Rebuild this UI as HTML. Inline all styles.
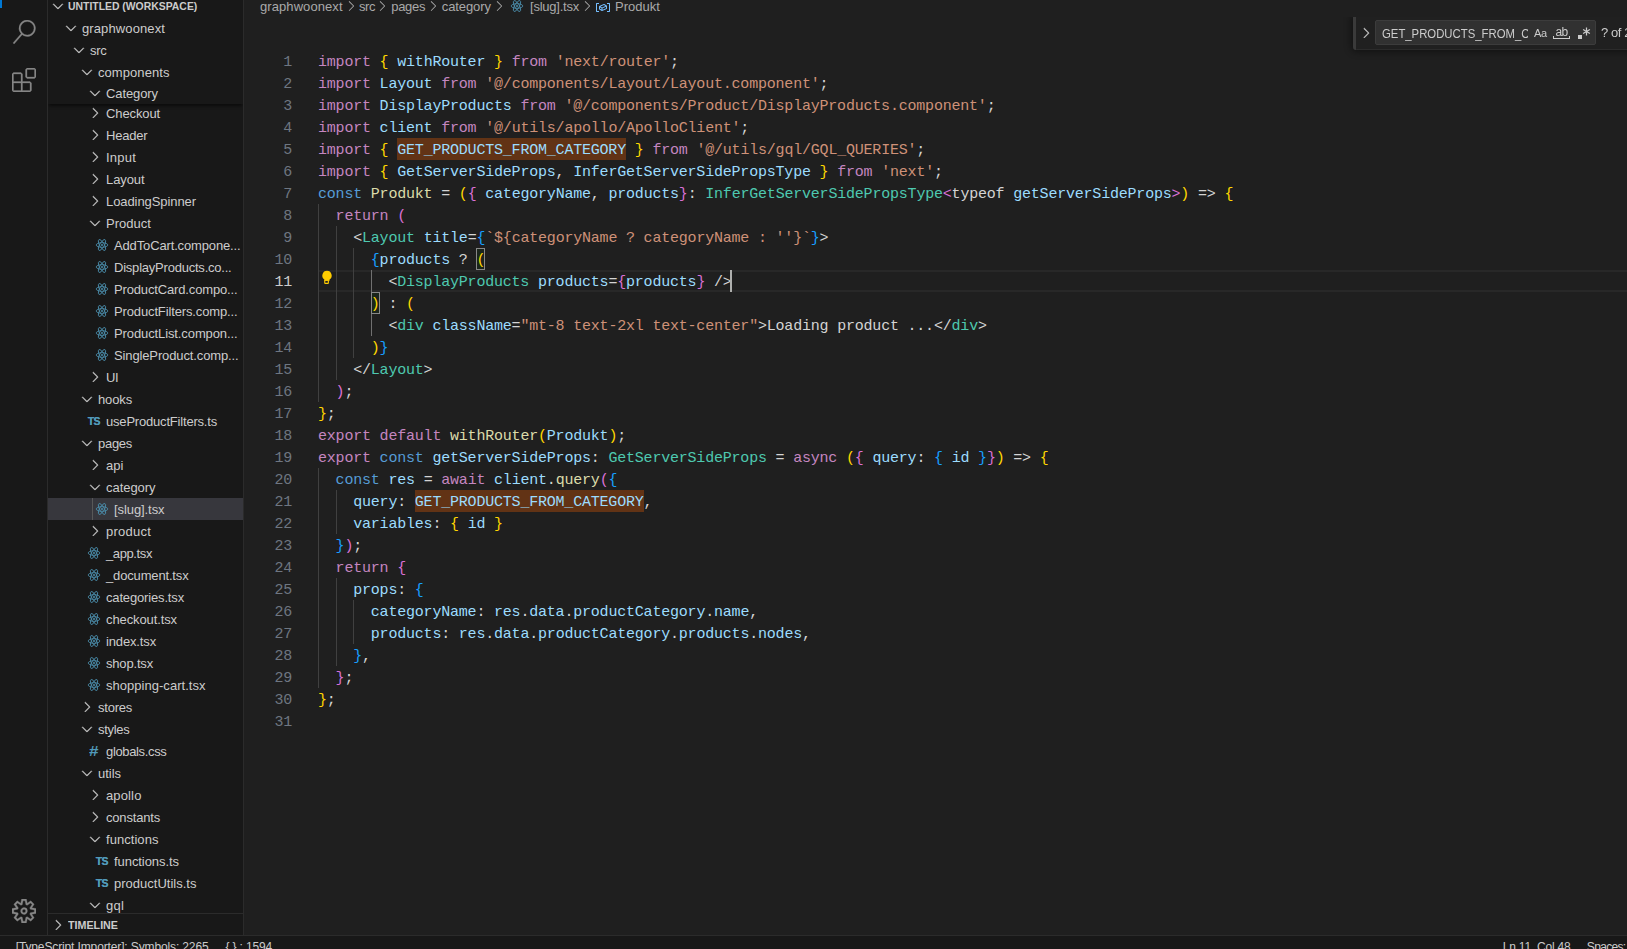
<!DOCTYPE html>
<html lang="en"><head><meta charset="utf-8"><title>[slug].tsx - Untitled (Workspace) - Visual Studio Code</title>
<style>
*{box-sizing:border-box;margin:0;padding:0}
html,body{width:1627px;height:949px;overflow:hidden;background:#1f1f1f}
body{font-family:"Liberation Sans",sans-serif;font-size:13px;color:#ccc;position:relative;-webkit-font-smoothing:antialiased}
#app{position:absolute;left:0;top:0;width:1627px;height:949px;overflow:hidden;background:#1f1f1f}
.abs{position:absolute}
#act{position:absolute;left:0;top:0;width:48px;height:935px;background:#181818;border-right:1px solid #2b2b2b}
#side{position:absolute;left:48px;top:0;width:196px;height:935px;background:#181818;border-right:1px solid #2b2b2b;overflow:hidden}
#side .inner{position:absolute;left:-48px;top:0;width:244px;height:935px}
#status{position:absolute;left:0;top:935px;width:1627px;height:22px;background:#181818;border-top:1px solid #2b2b2b;font-size:12px;color:#ccc}
.row{position:absolute;height:22px;line-height:22px;white-space:nowrap;color:#ccc}
.row .lbl{position:absolute;top:1px;left:16px}
.chev{position:absolute;left:-3px;top:3.4px;width:16px;height:16px;fill:#ccc;stroke:#ccc;stroke-width:.35}
.fi{position:absolute;left:-1px;top:4px;width:14px;height:14px}
.ts{position:absolute;left:-.3px;top:0;font-size:10.5px;font-weight:bold;color:#519aba;letter-spacing:-0.5px;text-shadow:0 0 .6px #519aba}
.hash{position:absolute;left:1px;top:0;font-size:14px;font-weight:bold;color:#519aba;transform:scaleX(1.22);transform-origin:0 50%}
.sel{position:absolute;left:48px;width:195px;height:22px;background:#37373d}
.hdr{position:absolute;font-size:11px;font-weight:bold;color:#ccc;line-height:22px;height:22px;white-space:nowrap}
.cl,.ln{position:absolute;height:22px;line-height:22px;white-space:pre;font-family:"Liberation Mono",monospace;font-size:15px;letter-spacing:-0.2045px}
.cl{left:318px;color:#d4d4d4;margin-top:2px}
.ln{left:243px;width:49px;text-align:right;color:#6e7681;margin-top:2px}
.ln.cur{color:#ccc}
.find{position:absolute;height:22px;background:#623315}
.bm{position:absolute;height:22px;border:1px solid #888;background:rgba(0,100,0,.1)}
.guide{position:absolute;width:1px;background:#404040}
.guide.act{background:#707070}
.curline{position:absolute;left:319px;top:270px;width:1308px;height:22px;border-top:2px solid #282828;border-bottom:2px solid #282828}
.bch{position:absolute;top:-1.6px;width:16px;height:16px;fill:#a9a9a9}
.fi-t{line-height:22px;height:22px;white-space:nowrap;color:#ccc;font-size:13px}
.bc{position:absolute;top:-4px;height:22px;line-height:22px;color:#a9a9a9;white-space:nowrap}
</style></head><body><div id="app">
<!--EDITOR-->
<div id="editor">
<div class="curline"></div>
<div class="guide" style="left:318.0px;top:204px;height:198px"></div><div class="guide" style="left:335.6px;top:226px;height:154px"></div><div class="guide" style="left:353.2px;top:248px;height:110px"></div><div class="guide act" style="left:370.8px;top:270px;height:66px"></div><div class="guide" style="left:318.0px;top:468px;height:220px"></div><div class="guide" style="left:335.6px;top:490px;height:44px"></div><div class="guide" style="left:335.6px;top:578px;height:88px"></div><div class="guide" style="left:353.2px;top:600px;height:44px"></div>
<div class="ln" style="top:50px">1</div>
<div class="cl" style="top:50px"><span style="color:#c586c0">import</span> <span style="color:#ffd700">{</span> <span style="color:#9cdcfe">withRouter</span> <span style="color:#ffd700">}</span> <span style="color:#c586c0">from</span> <span style="color:#ce9178">'next/router'</span><span style="color:#d4d4d4">;</span></div>
<div class="ln" style="top:72px">2</div>
<div class="cl" style="top:72px"><span style="color:#c586c0">import</span> <span style="color:#9cdcfe">Layout</span> <span style="color:#c586c0">from</span> <span style="color:#ce9178">'@/components/Layout/Layout.component'</span><span style="color:#d4d4d4">;</span></div>
<div class="ln" style="top:94px">3</div>
<div class="cl" style="top:94px"><span style="color:#c586c0">import</span> <span style="color:#9cdcfe">DisplayProducts</span> <span style="color:#c586c0">from</span> <span style="color:#ce9178">'@/components/Product/DisplayProducts.component'</span><span style="color:#d4d4d4">;</span></div>
<div class="ln" style="top:116px">4</div>
<div class="cl" style="top:116px"><span style="color:#c586c0">import</span> <span style="color:#9cdcfe">client</span> <span style="color:#c586c0">from</span> <span style="color:#ce9178">'@/utils/apollo/ApolloClient'</span><span style="color:#d4d4d4">;</span></div>
<div class="ln" style="top:138px">5</div>
<div class="find" style="left:397.47px;top:138px;width:228.72px"></div>
<div class="cl" style="top:138px"><span style="color:#c586c0">import</span> <span style="color:#ffd700">{</span> <span style="color:#9cdcfe">GET_PRODUCTS_FROM_CATEGORY</span> <span style="color:#ffd700">}</span> <span style="color:#c586c0">from</span> <span style="color:#ce9178">'@/utils/gql/GQL_QUERIES'</span><span style="color:#d4d4d4">;</span></div>
<div class="ln" style="top:160px">6</div>
<div class="cl" style="top:160px"><span style="color:#c586c0">import</span> <span style="color:#ffd700">{</span> <span style="color:#9cdcfe">GetServerSideProps</span><span style="color:#d4d4d4">, </span><span style="color:#9cdcfe">InferGetServerSidePropsType</span> <span style="color:#ffd700">}</span> <span style="color:#c586c0">from</span> <span style="color:#ce9178">'next'</span><span style="color:#d4d4d4">;</span></div>
<div class="ln" style="top:182px">7</div>
<div class="cl" style="top:182px"><span style="color:#569cd6">const</span> <span style="color:#dcdcaa">Produkt</span><span style="color:#d4d4d4"> = </span><span style="color:#ffd700">(</span><span style="color:#da70d6">{</span> <span style="color:#9cdcfe">categoryName</span><span style="color:#d4d4d4">, </span><span style="color:#9cdcfe">products</span><span style="color:#da70d6">}</span><span style="color:#d4d4d4">: </span><span style="color:#4ec9b0">InferGetServerSidePropsType</span><span style="color:#da70d6">&lt;</span><span style="color:#d4d4d4">typeof </span><span style="color:#9cdcfe">getServerSideProps</span><span style="color:#da70d6">&gt;</span><span style="color:#ffd700">)</span><span style="color:#d4d4d4"> =&gt; </span><span style="color:#ffd700">{</span></div>
<div class="ln" style="top:204px">8</div>
<div class="cl" style="top:204px">  <span style="color:#c586c0">return</span> <span style="color:#da70d6">(</span></div>
<div class="ln" style="top:226px">9</div>
<div class="cl" style="top:226px">    <span style="color:#d4d4d4">&lt;</span><span style="color:#4ec9b0">Layout</span> <span style="color:#9cdcfe">title</span><span style="color:#d4d4d4">=</span><span style="color:#179fff">{</span><span style="color:#ce9178">`${categoryName ? categoryName : ''}`</span><span style="color:#179fff">}</span><span style="color:#d4d4d4">&gt;</span></div>
<div class="ln" style="top:248px">10</div>
<div class="bm" style="left:476.35px;top:248px;width:8.80px"></div>
<div class="cl" style="top:248px">      <span style="color:#179fff">{</span><span style="color:#9cdcfe">products</span><span style="color:#d4d4d4"> ? </span><span style="color:#ffd700">(</span></div>
<div class="ln cur" style="top:270px">11</div>
<div class="cl" style="top:270px">        <span style="color:#d4d4d4">&lt;</span><span style="color:#4ec9b0">DisplayProducts</span> <span style="color:#9cdcfe">products</span><span style="color:#d4d4d4">=</span><span style="color:#da70d6">{</span><span style="color:#9cdcfe">products</span><span style="color:#da70d6">}</span> <span style="color:#d4d4d4">/&gt;</span></div>
<div class="ln" style="top:292px">12</div>
<div class="bm" style="left:370.78px;top:292px;width:8.80px"></div>
<div class="cl" style="top:292px">      <span style="color:#ffd700">)</span><span style="color:#d4d4d4"> : </span><span style="color:#ffd700">(</span></div>
<div class="ln" style="top:314px">13</div>
<div class="cl" style="top:314px">        <span style="color:#d4d4d4">&lt;</span><span style="color:#4ec9b0">div</span> <span style="color:#9cdcfe">className</span><span style="color:#d4d4d4">=</span><span style="color:#ce9178">"mt-8 text-2xl text-center"</span><span style="color:#d4d4d4">&gt;</span><span style="color:#d4d4d4">Loading product ...</span><span style="color:#d4d4d4">&lt;/</span><span style="color:#4ec9b0">div</span><span style="color:#d4d4d4">&gt;</span></div>
<div class="ln" style="top:336px">14</div>
<div class="cl" style="top:336px">      <span style="color:#ffd700">)</span><span style="color:#179fff">}</span></div>
<div class="ln" style="top:358px">15</div>
<div class="cl" style="top:358px">    <span style="color:#d4d4d4">&lt;/</span><span style="color:#4ec9b0">Layout</span><span style="color:#d4d4d4">&gt;</span></div>
<div class="ln" style="top:380px">16</div>
<div class="cl" style="top:380px">  <span style="color:#da70d6">)</span><span style="color:#d4d4d4">;</span></div>
<div class="ln" style="top:402px">17</div>
<div class="cl" style="top:402px"><span style="color:#ffd700">}</span><span style="color:#d4d4d4">;</span></div>
<div class="ln" style="top:424px">18</div>
<div class="cl" style="top:424px"><span style="color:#c586c0">export</span> <span style="color:#c586c0">default</span> <span style="color:#dcdcaa">withRouter</span><span style="color:#ffd700">(</span><span style="color:#9cdcfe">Produkt</span><span style="color:#ffd700">)</span><span style="color:#d4d4d4">;</span></div>
<div class="ln" style="top:446px">19</div>
<div class="cl" style="top:446px"><span style="color:#c586c0">export</span> <span style="color:#569cd6">const</span> <span style="color:#9cdcfe">getServerSideProps</span><span style="color:#d4d4d4">: </span><span style="color:#4ec9b0">GetServerSideProps</span><span style="color:#d4d4d4"> = </span><span style="color:#c586c0">async</span> <span style="color:#ffd700">(</span><span style="color:#da70d6">{</span> <span style="color:#9cdcfe">query</span><span style="color:#d4d4d4">: </span><span style="color:#179fff">{</span> <span style="color:#9cdcfe">id</span> <span style="color:#179fff">}</span><span style="color:#da70d6">}</span><span style="color:#ffd700">)</span><span style="color:#d4d4d4"> =&gt; </span><span style="color:#ffd700">{</span></div>
<div class="ln" style="top:468px">20</div>
<div class="cl" style="top:468px">  <span style="color:#569cd6">const</span> <span style="color:#9cdcfe">res</span><span style="color:#d4d4d4"> = </span><span style="color:#c586c0">await</span> <span style="color:#9cdcfe">client</span><span style="color:#d4d4d4">.</span><span style="color:#dcdcaa">query</span><span style="color:#da70d6">(</span><span style="color:#179fff">{</span></div>
<div class="ln" style="top:490px">21</div>
<div class="find" style="left:415.07px;top:490px;width:228.72px"></div>
<div class="cl" style="top:490px">    <span style="color:#9cdcfe">query</span><span style="color:#d4d4d4">: </span><span style="color:#9cdcfe">GET_PRODUCTS_FROM_CATEGORY</span><span style="color:#d4d4d4">,</span></div>
<div class="ln" style="top:512px">22</div>
<div class="cl" style="top:512px">    <span style="color:#9cdcfe">variables</span><span style="color:#d4d4d4">: </span><span style="color:#ffd700">{</span> <span style="color:#9cdcfe">id</span> <span style="color:#ffd700">}</span></div>
<div class="ln" style="top:534px">23</div>
<div class="cl" style="top:534px">  <span style="color:#179fff">}</span><span style="color:#da70d6">)</span><span style="color:#d4d4d4">;</span></div>
<div class="ln" style="top:556px">24</div>
<div class="cl" style="top:556px">  <span style="color:#c586c0">return</span> <span style="color:#da70d6">{</span></div>
<div class="ln" style="top:578px">25</div>
<div class="cl" style="top:578px">    <span style="color:#9cdcfe">props</span><span style="color:#d4d4d4">: </span><span style="color:#179fff">{</span></div>
<div class="ln" style="top:600px">26</div>
<div class="cl" style="top:600px">      <span style="color:#9cdcfe">categoryName</span><span style="color:#d4d4d4">: </span><span style="color:#9cdcfe">res</span><span style="color:#d4d4d4">.</span><span style="color:#9cdcfe">data</span><span style="color:#d4d4d4">.</span><span style="color:#9cdcfe">productCategory</span><span style="color:#d4d4d4">.</span><span style="color:#9cdcfe">name</span><span style="color:#d4d4d4">,</span></div>
<div class="ln" style="top:622px">27</div>
<div class="cl" style="top:622px">      <span style="color:#9cdcfe">products</span><span style="color:#d4d4d4">: </span><span style="color:#9cdcfe">res</span><span style="color:#d4d4d4">.</span><span style="color:#9cdcfe">data</span><span style="color:#d4d4d4">.</span><span style="color:#9cdcfe">productCategory</span><span style="color:#d4d4d4">.</span><span style="color:#9cdcfe">products</span><span style="color:#d4d4d4">.</span><span style="color:#9cdcfe">nodes</span><span style="color:#d4d4d4">,</span></div>
<div class="ln" style="top:644px">28</div>
<div class="cl" style="top:644px">    <span style="color:#179fff">}</span><span style="color:#d4d4d4">,</span></div>
<div class="ln" style="top:666px">29</div>
<div class="cl" style="top:666px">  <span style="color:#da70d6">}</span><span style="color:#d4d4d4">;</span></div>
<div class="ln" style="top:688px">30</div>
<div class="cl" style="top:688px"><span style="color:#ffd700">}</span><span style="color:#d4d4d4">;</span></div>
<div class="ln" style="top:710px">31</div>
<div class="abs" style="left:730px;top:270px;width:2px;height:22px;background:#aeafad"></div>
<span class="bc" style="left:260px;letter-spacing:0.077px">graphwoonext</span><span class="bc" style="left:359px;letter-spacing:-0.448px">src</span><span class="bc" style="left:391.3px;letter-spacing:-0.324px">pages</span><span class="bc" style="left:441.8px;letter-spacing:-0.097px">category</span><span class="bc" style="left:530px;letter-spacing:-0.230px">[slug].tsx</span><span class="bc" style="left:615px;letter-spacing:-0.002px">Produkt</span><svg class="bch" style="left:342.6px" viewBox="0 0 16 16"><path d="M10.072 8.024L5.715 3.667l.618-.62L11 7.716v.618L6.333 13l-.618-.619 4.357-4.357z"/></svg><svg class="bch" style="left:374.2px" viewBox="0 0 16 16"><path d="M10.072 8.024L5.715 3.667l.618-.62L11 7.716v.618L6.333 13l-.618-.619 4.357-4.357z"/></svg><svg class="bch" style="left:424.9px" viewBox="0 0 16 16"><path d="M10.072 8.024L5.715 3.667l.618-.62L11 7.716v.618L6.333 13l-.618-.619 4.357-4.357z"/></svg><svg class="bch" style="left:491px" viewBox="0 0 16 16"><path d="M10.072 8.024L5.715 3.667l.618-.62L11 7.716v.618L6.333 13l-.618-.619 4.357-4.357z"/></svg><svg class="bch" style="left:579px" viewBox="0 0 16 16"><path d="M10.072 8.024L5.715 3.667l.618-.62L11 7.716v.618L6.333 13l-.618-.619 4.357-4.357z"/></svg><svg class="abs" style="left:510px;top:-1px;width:14px;height:14px" viewBox="0 0 14 14"><g fill="none" stroke="#4b8fad" stroke-width=".85"><ellipse cx="7" cy="7" rx="5.8" ry="2.3"/><ellipse cx="7" cy="7" rx="6.1" ry="2.3" transform="rotate(60 7 7)"/><ellipse cx="7" cy="7" rx="6.1" ry="2.3" transform="rotate(120 7 7)"/></g><circle cx="7" cy="7" r="1" fill="#4b8fad"/></svg><svg class="abs" style="left:594.8px;top:-1.5px;width:16px;height:16px" viewBox="0 0 16 16"><path fill="#75beff" d="M2 5h2V4H1.5l-.5.5v8l.5.5H4v-1H2V5zm12.5-1H12v1h2v7h-2v1h2.5l.5-.5v-8l-.5-.5zm-2.74 2.57L12 7v2.51l-.3.45-4.5 2h-.46l-2.5-1.5-.24-.43v-2.5l.3-.46 4.5-2h.46l2.5 1.5zM5 9.71l1.5.9V9.28L5 8.38v1.33zm.58-2.15l1.45.87 3.39-1.5-1.45-.87-3.39 1.5zm1.95 3.17l3.5-1.56v-1.4l-3.5 1.55v1.41z"/></svg>
<div class="abs" style="left:1333px;top:17px;width:294px;height:60px;overflow:hidden;will-change:transform"><div class="abs" style="left:20px;top:0;width:290px;height:33px;background:#202020;box-shadow:0 0 7px 2px rgba(0,0,0,.42);border-bottom:1px solid #2b2b2b;border-bottom-left-radius:4px"></div><div class="abs" style="left:20px;top:0;width:3px;height:32.5px;background:#3a3a3a;border-bottom-left-radius:4px"></div><svg class="abs" style="left:25px;top:8px;width:16px;height:16px;fill:#ccc;stroke:#ccc;stroke-width:.35" viewBox="0 0 16 16"><path d="M10.072 8.024L5.715 3.667l.618-.62L11 7.716v.618L6.333 13l-.618-.619 4.357-4.357z"/></svg><div class="abs" style="left:42px;top:3px;width:221px;height:25px;background:#313131;border:1px solid #3c3c3c;border-radius:2px"></div><div class="abs" style="left:49px;top:6px;width:146px;height:22px;overflow:hidden"><span class="fi-t" style="display:inline-block;transform:scaleX(.872);transform-origin:0 50%">GET_PRODUCTS_FROM_CATEGORY</span></div><span class="abs" style="left:201px;top:5px;line-height:22px;font-size:11px;color:#ccc;letter-spacing:-0.3px">Aa</span><span class="abs" style="left:222.5px;top:4px;line-height:22px;font-size:12px;color:#ccc;letter-spacing:-0.6px">ab</span><div class="abs" style="left:220px;top:19px;width:17px;height:3px;border:1px solid #ccc;border-top:none"></div><div class="abs" style="left:245px;top:18px;width:4px;height:4px;background:#ccc"></div><svg class="abs" style="left:249px;top:10px;width:9px;height:9px" viewBox="0 0 9 9"><path d="M4.5 .6v7.8M1.1 2.55l6.8 3.9M7.9 2.55l-6.8 3.9" stroke="#ccc" stroke-width="1.25" fill="none"/></svg><span class="abs" style="left:268px;top:5px;line-height:22px;font-size:13px;color:#ccc;white-space:nowrap;letter-spacing:-0.4px">? of 2</span></div>
<svg class="abs" style="left:320px;top:270px;width:14px;height:15px" viewBox="0 0 14 15"><path fill="#ffcc00" d="M7 0.8a4.7 4.7 0 0 0-2.6 8.6v1.4h5.2V9.4A4.7 4.7 0 0 0 7 0.8z"/><rect x="4.75" y="10.1" width="3.6" height="3.3" rx=".5" fill="none" stroke="#ffcc00" stroke-width="1.1"/></svg>
</div>
<!--SIDEBAR-->
<div id="side"><div class="inner">
<div class="row" style="top:102px;left:90px"><svg class="chev" viewBox="0 0 16 16"><path d="M10.072 8.024L5.715 3.667l.618-.62L11 7.716v.618L6.333 13l-.618-.619 4.357-4.357z"/></svg><span class="lbl" style="left:16px;letter-spacing:-0.115px">Checkout</span></div>
<div class="row" style="top:124px;left:90px"><svg class="chev" viewBox="0 0 16 16"><path d="M10.072 8.024L5.715 3.667l.618-.62L11 7.716v.618L6.333 13l-.618-.619 4.357-4.357z"/></svg><span class="lbl" style="left:16px;letter-spacing:-0.190px">Header</span></div>
<div class="row" style="top:146px;left:90px"><svg class="chev" viewBox="0 0 16 16"><path d="M10.072 8.024L5.715 3.667l.618-.62L11 7.716v.618L6.333 13l-.618-.619 4.357-4.357z"/></svg><span class="lbl" style="left:16px;letter-spacing:0.216px">Input</span></div>
<div class="row" style="top:168px;left:90px"><svg class="chev" viewBox="0 0 16 16"><path d="M10.072 8.024L5.715 3.667l.618-.62L11 7.716v.618L6.333 13l-.618-.619 4.357-4.357z"/></svg><span class="lbl" style="left:16px;letter-spacing:-0.091px">Layout</span></div>
<div class="row" style="top:190px;left:90px"><svg class="chev" viewBox="0 0 16 16"><path d="M10.072 8.024L5.715 3.667l.618-.62L11 7.716v.618L6.333 13l-.618-.619 4.357-4.357z"/></svg><span class="lbl" style="left:16px;letter-spacing:-0.077px">LoadingSpinner</span></div>
<div class="row" style="top:212px;left:90px"><svg class="chev" viewBox="0 0 16 16"><path d="M7.976 10.072l4.357-4.357.62.618L8.284 11h-.618L3 6.333l.619-.618 4.357 4.357z"/></svg><span class="lbl" style="left:16px;letter-spacing:0.027px">Product</span></div>
<div class="row" style="top:234px;left:96px"><svg class="fi" viewBox="0 0 14 14"><g fill="none" stroke="#4b8fad" stroke-width=".85"><ellipse cx="7" cy="7" rx="5.8" ry="2.3"/><ellipse cx="7" cy="7" rx="6.1" ry="2.3" transform="rotate(60 7 7)"/><ellipse cx="7" cy="7" rx="6.1" ry="2.3" transform="rotate(120 7 7)"/></g><circle cx="7" cy="7" r="1" fill="#4b8fad"/></svg><span class="lbl" style="left:18px;letter-spacing:-0.143px">AddToCart.compone...</span></div>
<div class="row" style="top:256px;left:96px"><svg class="fi" viewBox="0 0 14 14"><g fill="none" stroke="#4b8fad" stroke-width=".85"><ellipse cx="7" cy="7" rx="5.8" ry="2.3"/><ellipse cx="7" cy="7" rx="6.1" ry="2.3" transform="rotate(60 7 7)"/><ellipse cx="7" cy="7" rx="6.1" ry="2.3" transform="rotate(120 7 7)"/></g><circle cx="7" cy="7" r="1" fill="#4b8fad"/></svg><span class="lbl" style="left:18px;letter-spacing:-0.219px">DisplayProducts.co...</span></div>
<div class="row" style="top:278px;left:96px"><svg class="fi" viewBox="0 0 14 14"><g fill="none" stroke="#4b8fad" stroke-width=".85"><ellipse cx="7" cy="7" rx="5.8" ry="2.3"/><ellipse cx="7" cy="7" rx="6.1" ry="2.3" transform="rotate(60 7 7)"/><ellipse cx="7" cy="7" rx="6.1" ry="2.3" transform="rotate(120 7 7)"/></g><circle cx="7" cy="7" r="1" fill="#4b8fad"/></svg><span class="lbl" style="left:18px;letter-spacing:-0.148px">ProductCard.compo...</span></div>
<div class="row" style="top:300px;left:96px"><svg class="fi" viewBox="0 0 14 14"><g fill="none" stroke="#4b8fad" stroke-width=".85"><ellipse cx="7" cy="7" rx="5.8" ry="2.3"/><ellipse cx="7" cy="7" rx="6.1" ry="2.3" transform="rotate(60 7 7)"/><ellipse cx="7" cy="7" rx="6.1" ry="2.3" transform="rotate(120 7 7)"/></g><circle cx="7" cy="7" r="1" fill="#4b8fad"/></svg><span class="lbl" style="left:18px;letter-spacing:-0.134px">ProductFilters.comp...</span></div>
<div class="row" style="top:322px;left:96px"><svg class="fi" viewBox="0 0 14 14"><g fill="none" stroke="#4b8fad" stroke-width=".85"><ellipse cx="7" cy="7" rx="5.8" ry="2.3"/><ellipse cx="7" cy="7" rx="6.1" ry="2.3" transform="rotate(60 7 7)"/><ellipse cx="7" cy="7" rx="6.1" ry="2.3" transform="rotate(120 7 7)"/></g><circle cx="7" cy="7" r="1" fill="#4b8fad"/></svg><span class="lbl" style="left:18px;letter-spacing:-0.106px">ProductList.compon...</span></div>
<div class="row" style="top:344px;left:96px"><svg class="fi" viewBox="0 0 14 14"><g fill="none" stroke="#4b8fad" stroke-width=".85"><ellipse cx="7" cy="7" rx="5.8" ry="2.3"/><ellipse cx="7" cy="7" rx="6.1" ry="2.3" transform="rotate(60 7 7)"/><ellipse cx="7" cy="7" rx="6.1" ry="2.3" transform="rotate(120 7 7)"/></g><circle cx="7" cy="7" r="1" fill="#4b8fad"/></svg><span class="lbl" style="left:18px;letter-spacing:-0.128px">SingleProduct.comp...</span></div>
<div class="row" style="top:366px;left:90px"><svg class="chev" viewBox="0 0 16 16"><path d="M10.072 8.024L5.715 3.667l.618-.62L11 7.716v.618L6.333 13l-.618-.619 4.357-4.357z"/></svg><span class="lbl" style="left:16px;letter-spacing:-0.500px">UI</span></div>
<div class="row" style="top:388px;left:82px"><svg class="chev" viewBox="0 0 16 16"><path d="M7.976 10.072l4.357-4.357.62.618L8.284 11h-.618L3 6.333l.619-.618 4.357 4.357z"/></svg><span class="lbl" style="left:16px;letter-spacing:-0.141px">hooks</span></div>
<div class="row" style="top:410px;left:88px"><span class="ts">TS</span><span class="lbl" style="left:18px;letter-spacing:-0.194px">useProductFilters.ts</span></div>
<div class="row" style="top:432px;left:82px"><svg class="chev" viewBox="0 0 16 16"><path d="M7.976 10.072l4.357-4.357.62.618L8.284 11h-.618L3 6.333l.619-.618 4.357 4.357z"/></svg><span class="lbl" style="left:16px;letter-spacing:-0.284px">pages</span></div>
<div class="row" style="top:454px;left:90px"><svg class="chev" viewBox="0 0 16 16"><path d="M10.072 8.024L5.715 3.667l.618-.62L11 7.716v.618L6.333 13l-.618-.619 4.357-4.357z"/></svg><span class="lbl" style="left:16px;letter-spacing:0.047px">api</span></div>
<div class="row" style="top:476px;left:90px"><svg class="chev" viewBox="0 0 16 16"><path d="M7.976 10.072l4.357-4.357.62.618L8.284 11h-.618L3 6.333l.619-.618 4.357 4.357z"/></svg><span class="lbl" style="left:16px;letter-spacing:-0.047px">category</span></div>
<div class="sel" style="top:498px"></div><div class="abs" style="left:92px;top:498px;width:1px;height:22px;background:#585858"></div><div class="row" style="top:498px;left:96px"><svg class="fi" viewBox="0 0 14 14"><g fill="none" stroke="#4b8fad" stroke-width=".85"><ellipse cx="7" cy="7" rx="5.8" ry="2.3"/><ellipse cx="7" cy="7" rx="6.1" ry="2.3" transform="rotate(60 7 7)"/><ellipse cx="7" cy="7" rx="6.1" ry="2.3" transform="rotate(120 7 7)"/></g><circle cx="7" cy="7" r="1" fill="#4b8fad"/></svg><span class="lbl" style="left:18px;letter-spacing:-0.080px">[slug].tsx</span></div>
<div class="row" style="top:520px;left:90px"><svg class="chev" viewBox="0 0 16 16"><path d="M10.072 8.024L5.715 3.667l.618-.62L11 7.716v.618L6.333 13l-.618-.619 4.357-4.357z"/></svg><span class="lbl" style="left:16px;letter-spacing:0.232px">product</span></div>
<div class="row" style="top:542px;left:88px"><svg class="fi" viewBox="0 0 14 14"><g fill="none" stroke="#4b8fad" stroke-width=".85"><ellipse cx="7" cy="7" rx="5.8" ry="2.3"/><ellipse cx="7" cy="7" rx="6.1" ry="2.3" transform="rotate(60 7 7)"/><ellipse cx="7" cy="7" rx="6.1" ry="2.3" transform="rotate(120 7 7)"/></g><circle cx="7" cy="7" r="1" fill="#4b8fad"/></svg><span class="lbl" style="left:18px;letter-spacing:-0.395px">_app.tsx</span></div>
<div class="row" style="top:564px;left:88px"><svg class="fi" viewBox="0 0 14 14"><g fill="none" stroke="#4b8fad" stroke-width=".85"><ellipse cx="7" cy="7" rx="5.8" ry="2.3"/><ellipse cx="7" cy="7" rx="6.1" ry="2.3" transform="rotate(60 7 7)"/><ellipse cx="7" cy="7" rx="6.1" ry="2.3" transform="rotate(120 7 7)"/></g><circle cx="7" cy="7" r="1" fill="#4b8fad"/></svg><span class="lbl" style="left:18px;letter-spacing:-0.157px">_document.tsx</span></div>
<div class="row" style="top:586px;left:88px"><svg class="fi" viewBox="0 0 14 14"><g fill="none" stroke="#4b8fad" stroke-width=".85"><ellipse cx="7" cy="7" rx="5.8" ry="2.3"/><ellipse cx="7" cy="7" rx="6.1" ry="2.3" transform="rotate(60 7 7)"/><ellipse cx="7" cy="7" rx="6.1" ry="2.3" transform="rotate(120 7 7)"/></g><circle cx="7" cy="7" r="1" fill="#4b8fad"/></svg><span class="lbl" style="left:18px;letter-spacing:-0.157px">categories.tsx</span></div>
<div class="row" style="top:608px;left:88px"><svg class="fi" viewBox="0 0 14 14"><g fill="none" stroke="#4b8fad" stroke-width=".85"><ellipse cx="7" cy="7" rx="5.8" ry="2.3"/><ellipse cx="7" cy="7" rx="6.1" ry="2.3" transform="rotate(60 7 7)"/><ellipse cx="7" cy="7" rx="6.1" ry="2.3" transform="rotate(120 7 7)"/></g><circle cx="7" cy="7" r="1" fill="#4b8fad"/></svg><span class="lbl" style="left:18px;letter-spacing:-0.105px">checkout.tsx</span></div>
<div class="row" style="top:630px;left:88px"><svg class="fi" viewBox="0 0 14 14"><g fill="none" stroke="#4b8fad" stroke-width=".85"><ellipse cx="7" cy="7" rx="5.8" ry="2.3"/><ellipse cx="7" cy="7" rx="6.1" ry="2.3" transform="rotate(60 7 7)"/><ellipse cx="7" cy="7" rx="6.1" ry="2.3" transform="rotate(120 7 7)"/></g><circle cx="7" cy="7" r="1" fill="#4b8fad"/></svg><span class="lbl" style="left:18px;letter-spacing:-0.146px">index.tsx</span></div>
<div class="row" style="top:652px;left:88px"><svg class="fi" viewBox="0 0 14 14"><g fill="none" stroke="#4b8fad" stroke-width=".85"><ellipse cx="7" cy="7" rx="5.8" ry="2.3"/><ellipse cx="7" cy="7" rx="6.1" ry="2.3" transform="rotate(60 7 7)"/><ellipse cx="7" cy="7" rx="6.1" ry="2.3" transform="rotate(120 7 7)"/></g><circle cx="7" cy="7" r="1" fill="#4b8fad"/></svg><span class="lbl" style="left:18px;letter-spacing:-0.178px">shop.tsx</span></div>
<div class="row" style="top:674px;left:88px"><svg class="fi" viewBox="0 0 14 14"><g fill="none" stroke="#4b8fad" stroke-width=".85"><ellipse cx="7" cy="7" rx="5.8" ry="2.3"/><ellipse cx="7" cy="7" rx="6.1" ry="2.3" transform="rotate(60 7 7)"/><ellipse cx="7" cy="7" rx="6.1" ry="2.3" transform="rotate(120 7 7)"/></g><circle cx="7" cy="7" r="1" fill="#4b8fad"/></svg><span class="lbl" style="left:18px;letter-spacing:0.029px">shopping-cart.tsx</span></div>
<div class="row" style="top:696px;left:82px"><svg class="chev" viewBox="0 0 16 16"><path d="M10.072 8.024L5.715 3.667l.618-.62L11 7.716v.618L6.333 13l-.618-.619 4.357-4.357z"/></svg><span class="lbl" style="left:16px;letter-spacing:-0.234px">stores</span></div>
<div class="row" style="top:718px;left:82px"><svg class="chev" viewBox="0 0 16 16"><path d="M7.976 10.072l4.357-4.357.62.618L8.284 11h-.618L3 6.333l.619-.618 4.357 4.357z"/></svg><span class="lbl" style="left:16px;letter-spacing:-0.289px">styles</span></div>
<div class="row" style="top:740px;left:88px"><span class="hash">#</span><span class="lbl" style="left:18px;letter-spacing:-0.347px">globals.css</span></div>
<div class="row" style="top:762px;left:82px"><svg class="chev" viewBox="0 0 16 16"><path d="M7.976 10.072l4.357-4.357.62.618L8.284 11h-.618L3 6.333l.619-.618 4.357 4.357z"/></svg><span class="lbl" style="left:16px;letter-spacing:-0.025px">utils</span></div>
<div class="row" style="top:784px;left:90px"><svg class="chev" viewBox="0 0 16 16"><path d="M10.072 8.024L5.715 3.667l.618-.62L11 7.716v.618L6.333 13l-.618-.619 4.357-4.357z"/></svg><span class="lbl" style="left:16px;letter-spacing:0.133px">apollo</span></div>
<div class="row" style="top:806px;left:90px"><svg class="chev" viewBox="0 0 16 16"><path d="M10.072 8.024L5.715 3.667l.618-.62L11 7.716v.618L6.333 13l-.618-.619 4.357-4.357z"/></svg><span class="lbl" style="left:16px;letter-spacing:-0.184px">constants</span></div>
<div class="row" style="top:828px;left:90px"><svg class="chev" viewBox="0 0 16 16"><path d="M7.976 10.072l4.357-4.357.62.618L8.284 11h-.618L3 6.333l.619-.618 4.357 4.357z"/></svg><span class="lbl" style="left:16px;letter-spacing:0.050px">functions</span></div>
<div class="row" style="top:850px;left:96px"><span class="ts">TS</span><span class="lbl" style="left:18px;letter-spacing:-0.064px">functions.ts</span></div>
<div class="row" style="top:872px;left:96px"><span class="ts">TS</span><span class="lbl" style="left:18px;letter-spacing:0.008px">productUtils.ts</span></div>
<div class="row" style="top:894px;left:90px"><svg class="chev" viewBox="0 0 16 16"><path d="M7.976 10.072l4.357-4.357.62.618L8.284 11h-.618L3 6.333l.619-.618 4.357 4.357z"/></svg><span class="lbl" style="left:16px;letter-spacing:0.214px">gql</span></div>
<div class="abs" style="left:48px;top:0;width:195px;height:104px;background:#181818;box-shadow:0 3px 3px -1px rgba(0,0,0,.55)"></div>
<div class="row" style="top:17px;left:66px"><svg class="chev" viewBox="0 0 16 16"><path d="M7.976 10.072l4.357-4.357.62.618L8.284 11h-.618L3 6.333l.619-.618 4.357 4.357z"/></svg><span class="lbl" style="left:16px;letter-spacing:0.111px">graphwoonext</span></div>
<div class="row" style="top:39px;left:74px"><svg class="chev" viewBox="0 0 16 16"><path d="M7.976 10.072l4.357-4.357.62.618L8.284 11h-.618L3 6.333l.619-.618 4.357 4.357z"/></svg><span class="lbl" style="left:16px;letter-spacing:-0.281px">src</span></div>
<div class="row" style="top:61px;left:82px"><svg class="chev" viewBox="0 0 16 16"><path d="M7.976 10.072l4.357-4.357.62.618L8.284 11h-.618L3 6.333l.619-.618 4.357 4.357z"/></svg><span class="lbl" style="left:16px;letter-spacing:0.067px">components</span></div>
<div class="row" style="top:82px;left:90px"><svg class="chev" viewBox="0 0 16 16"><path d="M7.976 10.072l4.357-4.357.62.618L8.284 11h-.618L3 6.333l.619-.618 4.357 4.357z"/></svg><span class="lbl" style="left:16px;letter-spacing:-0.094px">Category</span></div>
<div class="hdr" style="left:68px;top:-5px;transform:scaleX(0.9460);transform-origin:0 50%">UNTITLED (WORKSPACE)</div>
<div class="row" style="left:53px;top:-5px"><svg class="chev" viewBox="0 0 16 16"><path d="M7.976 10.072l4.357-4.357.62.618L8.284 11h-.618L3 6.333l.619-.618 4.357 4.357z"/></svg></div>
<div class="abs" style="left:48px;top:913px;width:195px;height:22px;background:#181818;border-top:1px solid #2b2b2b"></div>
<div class="hdr" style="left:68px;top:914px;transform:scaleX(0.9738);transform-origin:0 50%">TIMELINE</div>
<div class="row" style="left:53px;top:914px"><svg class="chev" viewBox="0 0 16 16"><path d="M10.072 8.024L5.715 3.667l.618-.62L11 7.716v.618L6.333 13l-.618-.619 4.357-4.357z"/></svg></div>
</div></div>
<!--ACTIVITY-->
<div id="act">
<div class="abs" style="left:0;top:0;width:2px;height:8px;background:#0078d4"></div>
<svg class="abs" style="left:12px;top:19.7px;width:24px;height:24px" viewBox="0 0 24 24"><path stroke="#868686" stroke-width=".3" fill="#868686" d="M15.25 0a8.25 8.25 0 0 0-6.18 13.72L1 22.88l1.12 1 8.05-9.12A8.251 8.251 0 1 0 15.25.01V0zm0 15a6.75 6.75 0 1 1 0-13.5 6.75 6.75 0 0 1 0 13.5z"/></svg><svg class="abs" style="left:12px;top:67.8px;width:24px;height:24px" viewBox="0 0 24 24"><path stroke="#868686" stroke-width=".3" fill="#868686" fill-rule="evenodd" d="M13.5 1.5L15 0h7.5L24 1.5V9l-1.5 1.5H15L13.5 9V1.5zm1.5 0V9h7.5V1.5H15zM0 15V6l1.5-1.5H9L10.5 6v7.5H18l1.5 1.5v7.5L18 24H1.5L0 22.5V15zm9-1.5V6H1.5v7.5H9zM9 15H1.5v7.5H9V15zm1.5 7.5H18V15h-7.5v7.5z"/></svg><svg class="abs" style="left:12px;top:898.6px;width:24px;height:24px" viewBox="0 0 24 24"><path stroke="#868686" stroke-width=".3" fill="#868686" fill-rule="evenodd" d="M19.85 8.75l4.15.83v4.84l-4.15.83 2.35 3.52-3.43 3.43-3.52-2.35-.83 4.15H9.58l-.83-4.15-3.52 2.35-3.43-3.43 2.35-3.52L0 14.42V9.58l4.15-.83L1.8 5.23 5.23 1.8l3.52 2.35L9.58 0h4.84l.83 4.15 3.52-2.35 3.43 3.43-2.35 3.52zm-1.57 5.07l4-.81v-2l-4-.81-.54-1.3 2.29-3.43-1.43-1.43-3.43 2.29-1.3-.54-.81-4h-2l-.81 4-1.3.54-3.43-2.29-1.43 1.43L6.38 8.9l-.54 1.3-4 .81v2l4 .81.54 1.3-2.29 3.43 1.43 1.43 3.43-2.29 1.3.54.81 4h2l.81-4 1.3-.54 3.43 2.29 1.43-1.43-2.29-3.43.54-1.3zm-8.186-4.672A3.43 3.43 0 0 1 12 8.57 3.44 3.44 0 0 1 15.43 12a3.43 3.43 0 1 1-5.336-2.852zm.956 4.274c.281.188.612.288.95.288A1.7 1.7 0 0 0 13.71 12a1.71 1.71 0 1 0-2.66 1.422z"/></svg>
</div>
<!--STATUS-->
<div id="status">
<span class="abs" style="left:15.7px;top:0;line-height:22px;white-space:nowrap;letter-spacing:-0.128px">[TypeScript Importer]: Symbols: 2265</span><span class="abs" style="left:225.5px;top:0;line-height:22px;white-space:nowrap;letter-spacing:-0.145px">{ } : 1594</span><span class="abs" style="left:1502.8px;top:0;line-height:22px;white-space:nowrap;letter-spacing:-0.215px">Ln 11, Col 48</span><span class="abs" style="left:1586.8px;top:0;line-height:22px;white-space:nowrap;letter-spacing:-0.666px">Spaces: 2</span>
</div>
</div></body></html>
